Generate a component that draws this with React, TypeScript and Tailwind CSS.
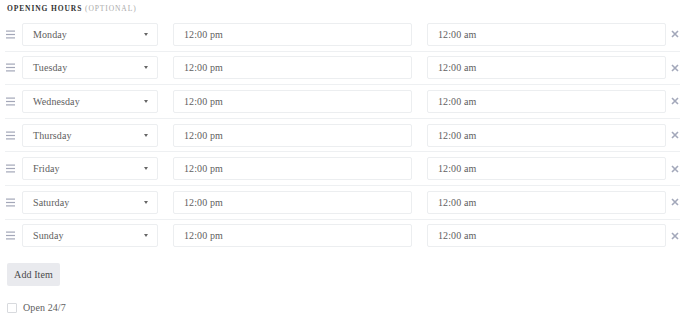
import { useState } from 'react'

const days = ['Monday', 'Tuesday', 'Wednesday', 'Thursday', 'Friday', 'Saturday', 'Sunday']

function Handle() {
  return (
    <svg width="9" height="9" viewBox="0 0 9 9" className="text-[#a3a7b8]">
      <rect x="0" y="0.5" width="9" height="1.2" fill="currentColor" />
      <rect x="0" y="3.9" width="9" height="1.2" fill="currentColor" />
      <rect x="0" y="7.3" width="9" height="1.2" fill="currentColor" />
    </svg>
  )
}

function Cross() {
  return (
    <svg width="8" height="8" viewBox="0 0 8 8" className="text-[#a3a8ba]">
      <path d="M1 1L7 7M7 1L1 7" stroke="currentColor" strokeWidth="1.6" />
    </svg>
  )
}

export default function App() {
  const [open, setOpen] = useState(false)
  return (
    <div
      className="w-[690px] h-[320px] bg-white text-[#606060] overflow-hidden"
      style={{ fontFamily: '"Liberation Serif", "Times New Roman", serif' }}
    >
      <div className="pl-[7px] pt-[4px] text-[7.5px] leading-[9px] tracking-[0.9px] uppercase">
        <span className="font-bold text-[#333]">Opening Hours</span>{' '}
        <span className="text-[#aaa]">(Optional)</span>
      </div>

      <div className="ml-[5px] w-[675px] mt-[5px]">
        {days.map((day, i) => (
          <div
            key={day}
            className={`flex items-center py-[4.8px] ${i < days.length - 1 ? 'border-b border-[#eef0f2]' : ''}`}
          >
            <div className="w-[17px] flex pl-[1px]">
              <Handle />
            </div>
            <div className="w-[136px] h-[23px] border border-[#eceef0] rounded-[2px] flex items-center justify-between pl-[10px] pr-[9px] text-[10px] tracking-[0.1px]">
              <span>{day}</span>
              <span className="w-0 h-0 border-l-[2.5px] border-r-[2.5px] border-t-[3px] border-l-transparent border-r-transparent border-t-[#666]" />
            </div>
            <div className="ml-[15px] w-[239px] h-[23px] border border-[#eceef0] rounded-[2px] flex items-center pl-[10px] text-[10px] tracking-[0.1px]">
              12:00 pm
            </div>
            <div className="ml-[15px] w-[239px] h-[23px] border border-[#eceef0] rounded-[2px] flex items-center pl-[10px] text-[10px] tracking-[0.1px]">
              12:00 am
            </div>
            <div className="flex-1 flex justify-end pr-[1px]">
              <Cross />
            </div>
          </div>
        ))}
      </div>

      <button className="ml-[7px] mt-[11px] w-[53px] h-[23px] bg-[#e9eaee] rounded-[2px] text-[10px] text-[#4a4a4a] tracking-[0.1px]">
        Add Item
      </button>

      <label className="flex items-center ml-[7px] mt-[14px] gap-[6px] text-[10px] tracking-[0.1px]">
        <span
          onClick={() => setOpen(!open)}
          className="w-[10px] h-[10px] border border-[#d8dade] rounded-[1px] bg-white"
        />
        <span>Open 24/7</span>
      </label>
    </div>
  )
}
